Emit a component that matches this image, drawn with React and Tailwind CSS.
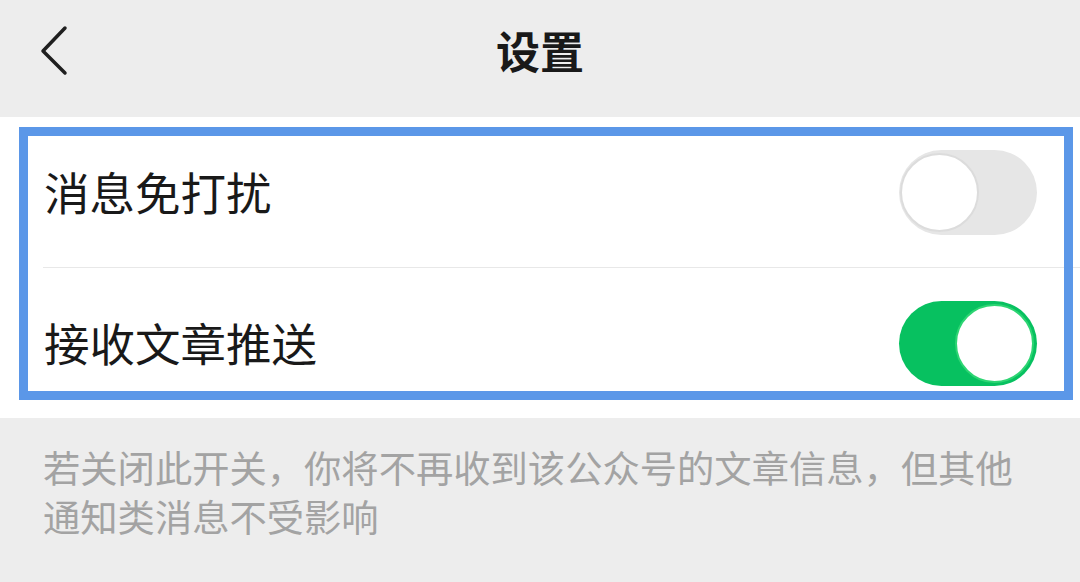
import { useState } from 'react';

const font = { fontFamily: '"Noto Sans CJK SC", "Noto Sans", sans-serif' };

function Toggle({ on, onChange }) {
  return (
    <button
      onClick={onChange}
      className={
        'relative w-[138px] h-[85px] rounded-full shrink-0 ' +
        (on ? 'bg-[#07c160]' : 'bg-[#e6e6e6]')
      }
    >
      <span
        className={
          'absolute top-[3px] w-[79px] h-[79px] rounded-full bg-white ' +
          (on ? 'right-[3px] border-[2px] border-[#2ed573]' : 'left-[1px] border-[2px] border-[#dcdcdc]')
        }
      />
    </button>
  );
}

function Row({ label, on, onChange, divider }) {
  return (
    <div className="flex flex-col">
      <div className="flex items-center justify-between h-[150px] pl-[44px] pr-[43px]">
        <span className="text-[45.5px] text-[#191919] leading-none">{label}</span>
        <Toggle on={on} onChange={onChange} />
      </div>
      {divider && <div className="ml-[43px] h-px bg-[#e8e8e8]" />}
    </div>
  );
}

export default function App() {
  const [mute, setMute] = useState(false);
  const [push, setPush] = useState(true);

  return (
    <div className="w-[1080px] h-[582px] bg-[#ededed] overflow-hidden" style={font}>
      <div className="relative flex items-center justify-center h-[117px] pb-[18px]">
        <svg className="absolute left-[36px] top-[24px]" width="36" height="52" viewBox="0 0 36 52">
          <polyline points="29,4 7,27 29,49" fill="none" stroke="#1f1f1f" strokeWidth="3.5" strokeLinecap="round" strokeLinejoin="round" />
        </svg>
        <h1 className="text-[44px] font-semibold text-[#191919] leading-none">设置</h1>
      </div>

      <div className="relative bg-white">
        <Row label="消息免打扰" on={mute} onChange={() => setMute(!mute)} divider />
        <Row label="接收文章推送" on={push} onChange={() => setPush(!push)} />
        <div className="absolute left-[19px] top-[10px] w-[1054px] h-[273px] border-[9px] border-[#5b97e8] pointer-events-none" />
      </div>

      <div className="pt-[25px] pl-[43px] text-[37.3px] leading-[49px] text-[#a3a3a3] whitespace-nowrap">
        若关闭此开关，你将不再收到该公众号的文章信息，但其他
        <br />
        通知类消息不受影响
      </div>
    </div>
  );
}
